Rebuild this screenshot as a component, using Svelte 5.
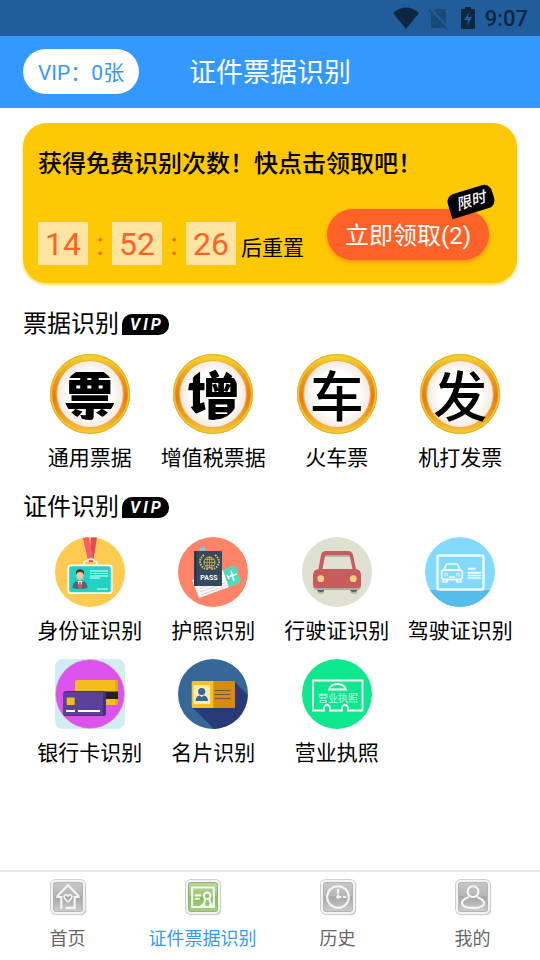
<script>
    import { onMount } from "svelte";

    const tickets = [
        { glyph: "票", label: "通用票据", round: true },
        { glyph: "增", label: "增值税票据", round: true },
        { glyph: "车", label: "火车票" },
        { glyph: "发", label: "机打发票" },
    ];

    const tabs = [
        { id: "home", label: "首页" },
        { id: "scan", label: "证件票据识别" },
        { id: "history", label: "历史" },
        { id: "mine", label: "我的" },
    ];

    let activeTab = $state("scan");
    let freeCount = $state(2);
    let vipCount = $state(0);
    let secondsLeft = $state(14 * 3600 + 52 * 60 + 26);

    const pad = (n) => String(n).padStart(2, "0");
    const hours = $derived(pad(Math.floor(secondsLeft / 3600)));
    const minutes = $derived(pad(Math.floor(secondsLeft / 60) % 60));
    const seconds = $derived(pad(secondsLeft % 60));

    const documents = [
        { label: "身份证识别", icon: idCard },
        { label: "护照识别", icon: passport },
        { label: "行驶证识别", icon: car },
        { label: "驾驶证识别", icon: driverLicence },
        { label: "银行卡识别", icon: bankCard },
        { label: "名片识别", icon: nameCard },
        { label: "营业执照", icon: businessLicence },
    ];

    function claim() {
        if (freeCount > 0) {
            freeCount -= 1;
            vipCount += 1;
        }
    }

    onMount(() => {
        document.title = "证件票据识别";
    });
</script>

{#snippet idCard()}
    <svg class="doc-icon" viewBox="0 0 70 70" aria-hidden="true">
        <circle cx="35" cy="35" r="35" fill="#ffca52" />
        <path d="M36 0.500h6L38 25h-4z" fill="#e04a55" />
        <path d="M28 1l5.500-1L39 24h-6z" fill="#fb5e66" />
        <path d="M29 29v-3q0-2 3-2 1-2 4-2t3 2q3 0 3 2v3" fill="none" stroke="#fff" stroke-width="1.600" />
        <rect x="12.500" y="27.500" width="45" height="29.500" rx="3" fill="#fff" />
        <rect x="14.200" y="29.200" width="41.600" height="26" rx="2" fill="#23d2c3" />
        <path d="M17.500 51q0-6 5-7h5q5 1 5 7-7.500 2-15 0z" fill="#5b6273" />
        <path d="M22.500 44l2.500 8 2.500-8z" fill="#fff" />
        <path d="M24.200 45h1.600l.7 6-1.500 1-1.500-1z" fill="#e94f55" />
        <ellipse cx="25" cy="38" rx="3.600" ry="5" fill="#f4c5a1" />
        <path d="M21 38q-1-6 4-6t4 6q-1-3-4-3t-4 3z" fill="#4b3b3a" />
        <path d="M35 34h18M35 36.500h18M35 39h18M35 41h10M42 52h11" stroke="#e3fffc" />
    </svg>
{/snippet}

{#snippet passport()}
    <svg class="doc-icon" viewBox="0 0 70 70" aria-hidden="true">
        <circle cx="35" cy="35" r="35" fill="#ff8369" />
        <path d="M14 43l31-10 6 17-30 11z" fill="#fdf9f5" />
        <path d="M45 33l12.500-5 5.500 17.500-12 4.500z" fill="#4ddbc0" />
        <path d="M22 55l25-9M23 58l27-10M21 52l24-9" stroke="#c6cdcf" stroke-width=".8" />
        <path d="M50 40l9-3M53 34l3 10M49 38l2 4" stroke="#fff" stroke-width="1.500" />
        <path d="M22 10l2 1 3-1v5h-5z" fill="#70cdf2" />
        <rect x="16" y="14" width="28" height="35" rx="1" fill="#34495e" />
        <path d="M16 14h3v35h-3z" fill="#263b50" />
        <g fill="none" stroke="#dcb858">
            <circle cx="31.500" cy="25.500" r="5.500" />
            <ellipse cx="31.500" cy="25.500" rx="2.500" ry="5.500" stroke-width=".7" />
            <path d="M26 25.500h11M31.500 20v11M27 22.500h9M27 28.500h9" stroke-width=".7" />
            <path d="M26 18q-6 5-3 10 2 4 7 4M37 18q6 5 3 10-2 4-7 4" stroke-width="2" stroke-dasharray="1.600 1" />
        </g>
        <text x="31" y="43" text-anchor="middle" font-size="7" font-weight="700" fill="#fff">PASS</text>
    </svg>
{/snippet}

{#snippet car()}
    <svg class="doc-icon" viewBox="0 0 70 70" aria-hidden="true">
        <circle cx="35" cy="35" r="35" fill="#dfe0d1" />
        <path d="M15.500 52h6.500v4q-3 2-6.500 0zM48.500 52H55v4q-3 2-6.500 0z" fill="#b3b3a9" />
        <path d="M15.500 49h6.500v5q-3 2-6.500 0zM48.500 49H55v5q-3 2-6.500 0z" fill="#4f5d73" />
        <path d="M11 46v3q0 4 4 4h40q4 0 4-4v-3z" fill="#b2ab9e" />
        <path fill-rule="evenodd" d="M16.500 32L19 18q1-4 5-4h22q4 0 5 4l3 14q5 1 5 6v9q0 4-4 4H15q-4 0-4-4v-9q0-5 5.500-6zm4 0h30L48 20q0-1.500-2-1.500H25q-2 0-2.300 1.500z" fill="#c75c5c" />
        <path d="M23 19q1-1 3-1h19q2 0 3 1v1H23z" fill="#b9b4a9" />
        <circle cx="18.700" cy="41.700" r="3.400" fill="#f5cf87" />
        <circle cx="51.300" cy="41.700" r="3.400" fill="#f5cf87" />
    </svg>
{/snippet}

{#snippet driverLicence()}
    <svg class="doc-icon" viewBox="0 0 70 70" aria-hidden="true">
        <circle cx="35" cy="35" r="35" fill="#84d9ff" />
        <path d="M5 53h60a35 35 0 0 1-60 0z" fill="#54bdeb" />
        <g fill="none" stroke="#effaff">
            <rect x="12.500" y="18.500" width="46" height="34" rx="1" stroke-width="2.400" />
            <path d="M19 33l2-5q.5-1 2-1h8q1.500 0 2 1l2 5" stroke-width="1.600" />
            <rect x="16.700" y="33" width="20.600" height="9.500" rx="2.500" stroke-width="1.800" />
            <path d="M18 43v2h4v-2M32 43v2h4v-2M24 40h6" stroke-width="1.600" />
            <circle cx="21" cy="37.500" r="1.600" />
            <circle cx="33" cy="37.500" r="1.600" />
            <path d="M43 31.700h7.500M42.500 35.700h13.500" stroke-width="2" />
            <path d="M42.500 38.500h13.500M42.500 41h13.500" stroke-width="1.300" />
        </g>
    </svg>
{/snippet}

{#snippet bankCard()}
    <svg class="doc-icon" viewBox="0 0 70 70" aria-hidden="true">
        <rect width="70" height="70" rx="8" fill="#d1edf4" />
        <circle cx="35" cy="35" r="34.300" fill="#dc53ed" stroke="#d98caf" stroke-width=".6" />
        <rect x="20" y="21" width="43" height="25" rx="3" fill="#f4bd1e" />
        <path d="M60 21q3 0 3 3v19q0 3-3 3z" fill="#e3a91a" />
        <path d="M20 32.500h43v7.500H20z" fill="#25221f" />
        <rect x="8" y="32" width="43" height="25" rx="3" fill="#5b4298" />
        <path d="M48 32q3 0 3 3v19q0 3-3 3H11q-3 0-3-2 1 1 3 1h37zM9 34q1-2 3-2h36v1H12z" fill="#443174" />
        <rect x="11.700" y="38.500" width="8" height="7.500" rx="1" fill="#f4bd1e" />
        <path d="M11 52h9M23 52h22" stroke="#fff" stroke-width="2" />
    </svg>
{/snippet}

{#snippet nameCard()}
    <svg class="doc-icon" viewBox="0 0 70 70" aria-hidden="true">
        <circle cx="35" cy="35" r="35" fill="#366796" />
        <path d="M56.500 22.500L69.700 36A35 35 0 0 1 36 70L15 49z" fill="#283a78" />
        <rect x="13.700" y="22" width="43" height="27" rx="1.500" fill="#fcc21b" />
        <path d="M35.300 22h20q1.400 0 1.400 1.500v24q0 1.500-1.400 1.500h-20z" fill="#d58c0c" />
        <path d="M15.500 26H32v19H15.500z" fill="#fcebb8" />
        <circle cx="23.700" cy="32.500" r="3.600" fill="#366796" />
        <path d="M17.500 42q0-5 4.200-5.500l2 1.500 2-1.500q4.300.5 4.300 5.500z" fill="#366796" />
        <path d="M36.700 31.500h15.600M36.700 35.500h15.600M36.700 39.500h15.600" stroke="#6b5a3d" stroke-width="1.200" />
    </svg>
{/snippet}

{#snippet businessLicence()}
    <svg class="doc-icon" viewBox="0 0 70 70" aria-hidden="true">
        <circle cx="35" cy="35" r="35" fill="#0de88e" />
        <g fill="none" stroke="#fff" stroke-width="1.800">
            <path d="M11 21.500h49.500v30H46V48q-3-4.500-6 0v3.500H28V48q-3-4.500-6 0v3.500H11z" />
            <path d="M27 30.500q2-5.500 8.500-5.500t8.500 5.500z" />
        </g>
        <text x="36" y="42.500" text-anchor="middle" font-size="10" fill="#c4fde4">营业执照</text>
    </svg>
{/snippet}

{#snippet tabArt(id)}
    {#if id === "home"}
        <path d="M5 17L18 4l13 13M4 18h6v14M32 18h-6v13H15" />
        <path d="M14 16q2-2 4 1 2-3 4-1t-1 5l-3 3-3-3q-3-3-1-5z" stroke-width="1.800" />
    {:else if id === "scan"}
        <path d="M4 6.500h28M4 30h28" />
        <path d="M5 7v23M31 7v23M8 16h8M8 20h6" />
        <circle cx="23" cy="16.500" r="4" />
        <path d="M20 20q2 3-3 8h4M26 20q-1 3 3 8h-4" />
    {:else if id === "history"}
        <circle cx="18" cy="18" r="13" />
        <path d="M18 8v6M18 15v5M16 18h6M24 18h4" />
    {:else}
        <circle cx="18" cy="11.500" r="6.500" />
        <path d="M13 18q-10 4-8 9 3 4 13 4t13-4q2-5-8-9" />
    {/if}
{/snippet}

<div class="page">
    <div class="status-bar">
        <svg width="28" height="24" viewBox="0 0 28 24" aria-hidden="true">
            <path d="M1 7Q14-4 27 7L14 23z" fill="#0e2740" />
        </svg>
        <svg width="20" height="24" viewBox="0 0 20 24" aria-hidden="true">
            <path d="M8 3h9q1 0 1 1v17q0 1-1 1H4q-1 0-1-1V8z" fill="#1c4a78" />
            <path d="M2 3l18 19" stroke="#205d9a" stroke-width="3" />
            <path d="M1 4l18 19" stroke="#1c4a78" stroke-width="1.800" />
        </svg>
        <svg class="battery" width="14" height="24" viewBox="0 0 14 24" aria-hidden="true">
            <path d="M0 3h4V1h6v2h4v20H0z" fill="#0e2740" />
            <path d="M8 6l-5 8h4l-1 6 5-9H7z" fill="#205d9a" />
        </svg>
        <span>9:07</span>
    </div>

    <header class="top-bar">
        <button class="vip-count" type="button">VIP：{vipCount}张</button>
        <h1>证件票据识别</h1>
    </header>

    <main>
        <section class="promo">
            <h2>获得免费识别次数！快点击领取吧！</h2>
            <div class="promo-row">
                <div class="countdown">
                    <span class="digits">{hours}</span>
                    <span class="colon">:</span>
                    <span class="digits">{minutes}</span>
                    <span class="colon">:</span>
                    <span class="digits">{seconds}</span>
                    <span class="reset">后重置</span>
                </div>
                <div class="claim-wrap">
                    <button class="claim" type="button" onclick={claim}>立即领取({freeCount})</button>
                    <span class="limited">限时</span>
                </div>
            </div>
        </section>

        <section class="group">
            <h2>票据识别<span class="vip-tag">VIP</span></h2>
            <div class="grid">
                {#each tickets as item}
                    <button class="item" type="button">
                        <span class="coin">
                            <span class="face">
                                <span class="glyph" class:round={item.round}>{item.glyph}</span>
                            </span>
                        </span>
                        {item.label}
                    </button>
                {/each}
            </div>
        </section>

        <section class="group">
            <h2>证件识别<span class="vip-tag">VIP</span></h2>
            <div class="grid">
                {#each documents as item}
                    <button class="item" type="button">
                        {@render item.icon()}
                        {item.label}
                    </button>
                {/each}
            </div>
        </section>
    </main>

    <nav class="tab-bar">
        {#each tabs as tab}
            <a
                href="#{tab.id}"
                class:active={activeTab === tab.id}
                onclick={() => (activeTab = tab.id)}
            >
                <span class="tab-icon">
                    <svg viewBox="0 0 36 36" aria-hidden="true">
                        {@render tabArt(tab.id)}
                    </svg>
                </span>
                {tab.label}
            </a>
        {/each}
    </nav>
</div>

<style>
    :global(body) {
        background: #fff;
    }

    .page {
        min-height: 100vh;
        display: flex;
        flex-direction: column;
        font-family: Roboto, "Noto Sans CJK SC", sans-serif;
        color: #000;
    }

    button {
        border: none;
        padding: 0;
        font: inherit;
        color: inherit;
        background: none;
        white-space: nowrap;
        cursor: pointer;
    }

    h1,
    h2 {
        margin: 0;
        font-weight: 400;
    }

    .status-bar {
        height: 36px;
        padding-right: 12px;
        display: flex;
        align-items: center;
        justify-content: flex-end;
        gap: 8px;
        background: #205d9a;
        color: #0e2740;
        font-size: 22px;
        font-weight: 500;
    }

    .battery {
        margin: 0 2px 0 5px;
    }

    .top-bar {
        padding: 13px 23px 10px;
        display: grid;
        grid-template-columns: 1fr auto 1fr;
        align-items: start;
        background: #3399ff;
        color: #fff;
    }

    .vip-count {
        justify-self: start;
        height: 45px;
        padding: 0 15px 1px;
        border-radius: 23px;
        background: #fff;
        color: #3399ff;
        font-size: 21px;
    }

    h1 {
        font-size: 27px;
        line-height: 49px;
    }

    main {
        flex: 1;
        padding: 15px 0;
    }

    .promo {
        margin: 0 23px 23px;
        padding: 23px 28px 17px 15px;
        border-radius: 24px;
        background: #ffc805;
        box-shadow: 0 2px 3px rgba(255, 190, 0, 0.6);
    }

    .promo h2 {
        font-size: 24px;
        line-height: 36px;
        font-weight: 500;
    }

    .promo-row {
        margin-top: 27px;
        display: flex;
        align-items: flex-start;
        justify-content: space-between;
    }

    .countdown {
        padding-top: 13px;
        display: flex;
        align-items: baseline;
        color: #ff6229;
        font-size: 32px;
        line-height: 43px;
    }

    .digits {
        width: 50px;
        padding-top: 2px;
        line-height: 41px;
        text-align: center;
        background: #fde4a0;
    }

    .colon {
        width: 24px;
        text-align: center;
    }

    .reset {
        margin-left: 5px;
        color: #000;
        font-size: 21px;
        line-height: 24px;
    }

    .claim-wrap {
        position: relative;
    }

    .claim {
        height: 51px;
        padding: 0 18px 2px;
        border-radius: 26px;
        background: #ff6229;
        box-shadow: 0 2px 4px rgba(255, 98, 41, 0.6);
        color: #fff;
        font-size: 24px;
    }

    .limited {
        position: absolute;
        top: -20px;
        right: -5px;
        width: 46px;
        border-radius: 8px 8px 8px 0;
        background: #000;
        color: #fff;
        font-size: 15px;
        line-height: 24px;
        font-style: italic;
        font-weight: 500;
        text-align: center;
        transform: rotate(-17deg);
    }

    .group h2 {
        padding-left: 23px;
        display: flex;
        align-items: center;
        gap: 3px;
        font-size: 24px;
        line-height: 36px;
    }

    .vip-tag {
        padding: 0 5px 0 8px;
        border-radius: 10px 10px 10px 0;
        background: #000;
        color: #fff;
        font-size: 16px;
        line-height: 21px;
        font-style: italic;
        font-weight: 700;
        letter-spacing: 3px;
    }

    .grid {
        margin: 12px 18px 19px 28px;
        display: grid;
        grid-template-columns: repeat(4, 1fr);
        row-gap: 16px;
    }

    .item {
        display: flex;
        flex-direction: column;
        align-items: center;
        gap: 12px;
        font-size: 21px;
        line-height: 24px;
    }

    .doc-icon {
        width: 70px;
        height: 70px;
    }

    .coin {
        box-sizing: border-box;
        width: 80px;
        height: 80px;
        padding: 7px;
        border-radius: 50%;
        background: linear-gradient(#f1dc28, #eb981d 30%, #e67b14 55%, #ee9a20 75%, #f5cb3b);
        box-shadow:
            inset 0 0 0 1px #dcb42c,
            inset 0 0 0 2px #f6ca30;
    }

    .face {
        width: 66px;
        height: 66px;
        display: grid;
        place-items: center;
        border-radius: 50%;
        background: radial-gradient(circle, #fff 45%, #f8f1e9 62%, #efdccc);
        box-shadow: 0 0 0 1px #f4a947;
        font-family: "Noto Sans CJK SC", sans-serif;
    }

    .glyph {
        width: 56px;
        height: 56px;
        color: #000;
        font-size: 54px;
        line-height: 56px;
        font-weight: 500;
        text-align: center;
    }

    .glyph.round {
        font-weight: 900;
        clip-path: circle(26px);
    }

    .tab-bar {
        display: grid;
        grid-template-columns: repeat(4, 1fr);
        border-top: 2px solid #e8e8e8;
    }

    .tab-bar a {
        padding: 8px 0 9px;
        display: flex;
        flex-direction: column;
        align-items: center;
        gap: 13px;
        color: #666;
        font-size: 18px;
        line-height: 24px;
        text-decoration: none;
    }

    .tab-bar a.active {
        color: #3399ff;
    }

    .tab-icon {
        box-sizing: border-box;
        width: 34px;
        height: 34px;
        border: 2px solid #f4f2f2;
        border-radius: 5px;
        background: linear-gradient(#c9c9c9, #b5b5b5 45%, #a6a6a6 50%, #cfcfcf);
        box-shadow:
            inset 0 0 0 1px #b4b4b4,
            0 0 0 1px #d2cece,
            1px 1px 1px #a8a2a2;
    }

    .active .tab-icon {
        background: linear-gradient(#b8d79a, #9cc775 45%, #89bb5c 50%, #a8d080);
        box-shadow:
            inset 0 0 0 1px #91b873,
            0 0 0 1px #d2cece,
            1px 1px 1px #a8a2a2;
    }

    .tab-icon svg {
        display: block;
        width: 30px;
        height: 30px;
        fill: none;
        stroke: #f6f6f6;
        stroke-width: 2.5;
    }
</style>
